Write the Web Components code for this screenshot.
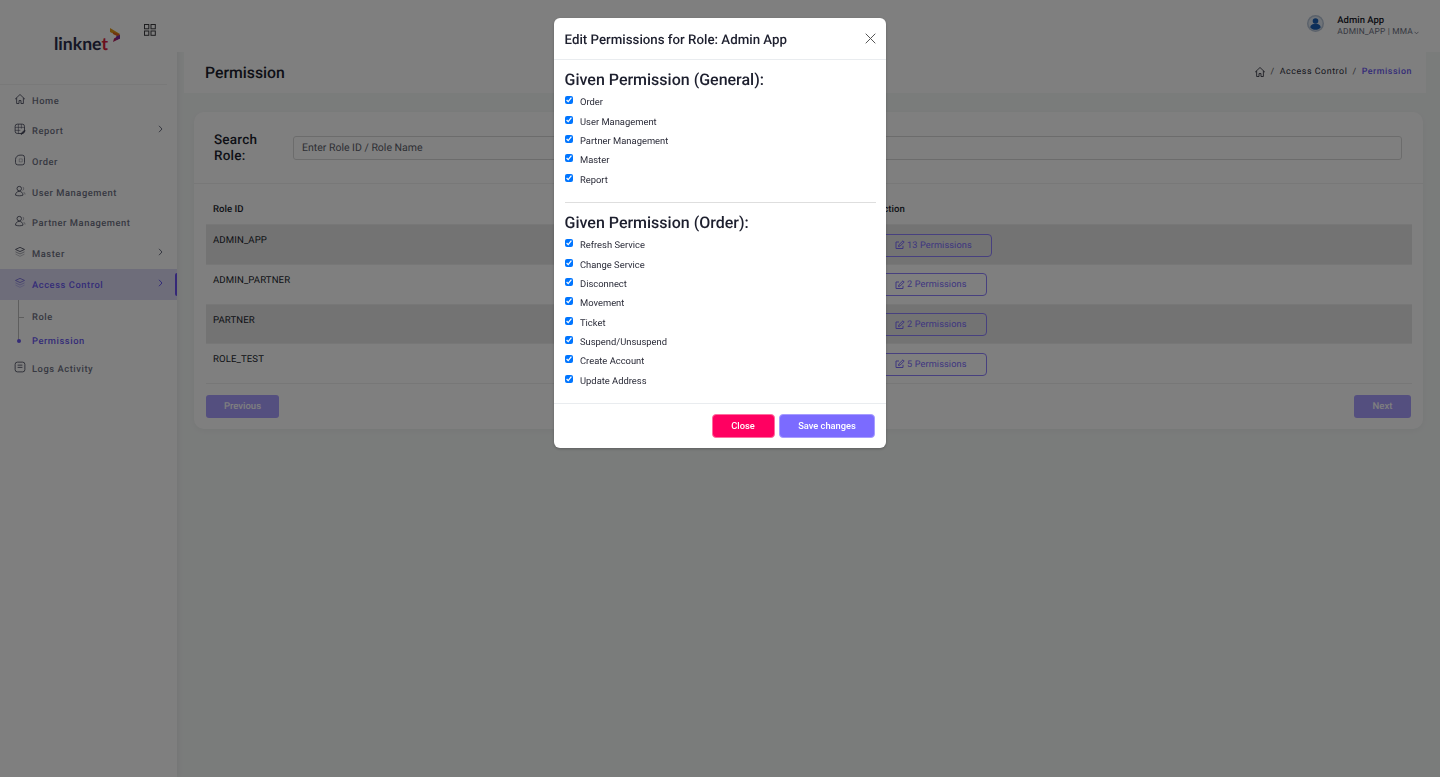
<!DOCTYPE html>
<html lang="en">
<head>
<meta charset="utf-8">
<title>Permission</title>
<style>
  html, body { margin: 0; height: 100%; }
  body { background: #f5f8f7; font-family: Roboto, "Liberation Sans", sans-serif; overflow: hidden; text-rendering: geometricPrecision; }
  app-shell { height: 777px; }
</style>
</head>
<body>
<app-shell>
  <app-sidebar slot="sidebar">
    <nav-item icon="home" label="Home"></nav-item>
    <nav-item icon="report" label="Report" arrow></nav-item>
    <nav-item icon="order" label="Order"></nav-item>
    <nav-item icon="user" label="User Management"></nav-item>
    <nav-item icon="user" label="Partner Management"></nav-item>
    <nav-item icon="layers" label="Master" arrow></nav-item>
    <nav-item icon="layers" label="Access Control" arrow active></nav-item>
    <nav-sub>
      <nav-sub-item label="Role"></nav-sub-item>
      <nav-sub-item label="Permission" active></nav-sub-item>
    </nav-sub>
    <nav-item icon="logs" label="Logs Activity"></nav-item>
  </app-sidebar>
  <app-topbar slot="topbar"></app-topbar>
  <page-title slot="main"></page-title>
  <role-card slot="main">
    <role-row striped role="ADMIN_APP" count="13"></role-row>
    <role-row role="ADMIN_PARTNER" count="2"></role-row>
    <role-row striped role="PARTNER" count="2"></role-row>
    <role-row role="ROLE_TEST" count="5"></role-row>
  </role-card>
</app-shell>
<perm-modal title-text="Edit Permissions for Role: Admin App">
  <perm-group heading="Given Permission (General):" items="Order|User Management|Partner Management|Master|Report"></perm-group>
  <hr-line></hr-line>
  <perm-group heading="Given Permission (Order):" items="Refresh Service|Change Service|Disconnect|Movement|Ticket|Suspend/Unsuspend|Create Account|Update Address"></perm-group>
</perm-modal>

<script>
const ICONS = {
  home: `<path d="M1.500 8.200 8 2l6.500 6.200"/><path d="M3.500 6.500v7.500h3.200v-4h2.600v4h3.200V6.500"/>`,
  report: `<rect x="1.500" y="1.500" width="12.500" height="12.500" rx="3"/><path d="M1.500 5.800h12.500M1.500 9.800h7M5.800 1.500v12.500M9.800 1.500v6" stroke-opacity=".7"/><path d="m9.500 14 4.500-4.500 1 1-4.500 4.500h-1z" fill="currentColor"/>`,
  order: `<path d="M8 1.500h3a3 3 0 0 1 3 3v7a3 3 0 0 1-3 3H5a3 3 0 0 1-3-3V7.500A6 6 0 0 1 8 1.500z"/><path d="M7 6.500h4v4H7z" stroke-opacity=".4"/>`,
  user: `<circle cx="7" cy="4.800" r="3"/><path d="M2 13.500c0-3 2.200-5 5-5s5 2 5 5c-2.800 1.200-7.200 1.200-10 0z"/><path d="M11.500 2.500a2.800 2.800 0 0 1 0 4.800M13 9.500c1 .7 1.700 1.800 1.700 3.200" stroke-opacity=".55"/>`,
  layers: `<path d="M8 1.800 14 4.600 8 7.400 2 4.600z"/><path d="M2 7.800 8 10.600 14 7.800" stroke-opacity=".6"/><path d="M2 10.800 8 13.800l6-3" stroke-opacity=".4"/>`,
  logs: `<rect x="1.500" y="1.500" width="13" height="13" rx="3"/><path d="M4.800 5.500h6.400M4.800 8.500h6.400"/>`
};

function defineEl(name, css, html) {
  customElements.define(name, class extends HTMLElement {
    connectedCallback() {
      if (this.shadowRoot) return;
      const root = this.attachShadow({ mode: "open" });
      const a = (n) => this.getAttribute(n) || "";
      root.innerHTML = `<style>${css}</style>${html(a, this)}`;
    }
  });
}

defineEl("app-shell", `
  :host { display: grid; grid-template-columns: 177px 1fr; grid-template-rows: 52px 1fr; }
  .side { grid-row: 1 / 3; display: block; }
  .main { padding: 0 14px 0 7px; min-width: 0; }
`, () => `
  <div class="side"><slot name="sidebar"></slot></div>
  <div><slot name="topbar"></slot></div>
  <div class="main"><slot name="main"></slot></div>
`);

defineEl("app-sidebar", `
  :host { display: block; height: 777px; background: #fff; box-shadow: 2px 0 5px rgba(0,0,0,.05); }
  .brand { height: 84.700px; box-sizing: border-box; position: relative; border-bottom: 1px solid #f3f3f3; margin-right: 10px; }
  .logo { position: absolute; left: 54px; top: 27px; display: flex; align-items: flex-start; }
  .word { font: 700 17.600px/1 Lato, sans-serif; color: #2a2d4a; margin-top: 8px; }
  .word i { font-style: normal; color: #d8203c; }
  .mark { margin-left: 1px; margin-top: 1px; }
  .grid { position: absolute; left: 144px; top: 24px; }
`, () => `
  <div class="brand">
    <div class="logo">
      <span class="word">linkne<i>t</i></span>
      <svg class="mark" width="12" height="15" viewBox="0 0 12 15"><path d="M1 0l10 6-3 1.500L1 4z" fill="#e39a1a"/><path d="M4 4l7 2.500-2 2L4 6z" fill="#e0641f"/><path d="M11 7v3.500L4 14l1-3.500z" fill="#b3205f"/><path d="M7 8.500l4-1.500v3.500L7 12z" fill="#7d2a9e"/></svg>
    </div>
    <svg class="grid" width="12" height="12" viewBox="0 0 12 12" fill="none" stroke="#3a3a3f" stroke-width="1"><rect x=".5" y=".5" width="4.300" height="4.300"/><rect x="7" y=".5" width="4.300" height="4.300"/><rect x=".5" y="7" width="4.300" height="4.300"/><rect x="7" y="7" width="4.300" height="4.300"/></svg>
  </div>
  <slot></slot>
`);

defineEl("nav-item", `
  :host { display: block; }
  .row { height: 30.700px; display: flex; align-items: center; padding-left: 14px; position: relative; font: 500 9.350px Roboto, sans-serif; letter-spacing: .55px; color: #6e7183; box-sizing: border-box; }
  .row.on { background: #dcdbf5; color: #6a58f0; }
  svg.ic { width: 12px; height: 12px; margin-right: 6px; margin-top: -3px; fill: none; stroke: #44465a; stroke-width: 1.100; color: #44465a; }
  .on svg.ic { stroke: #7468d8; color: #7468d8; }
  .txt { padding-top: 2px; }
  .arr { position: absolute; left: 158px; top: 10px; width: 5px; height: 8px; fill: none; stroke: #6e7183; stroke-width: 1; }
  .on .arr { stroke: #6a58f0; }
  .bar { position: absolute; right: 0; top: 4px; bottom: 4px; width: 2.500px; border-radius: 2px 0 0 2px; background: #6a50f0; }
`, (a, el) => `
  <div class="row ${el.hasAttribute("active") ? "on" : ""}">
    <svg class="ic" viewBox="0 0 16 16">${ICONS[a("icon")]}</svg>
    <span class="txt">${a("label")}</span>
    ${el.hasAttribute("arrow") ? `<svg class="arr" viewBox="0 0 5 8"><path d="m1 .8 3 3.200-3 3.200"/></svg>` : ""}
    ${el.hasAttribute("active") ? `<span class="bar"></span>` : ""}
  </div>
`);

defineEl("nav-sub", `
  :host { display: block; padding: 6px 0 0; position: relative; }
  .line { position: absolute; left: 18px; top: 0; height: 41px; width: 1px; background: #bdbdbd; }
`, () => `<span class="line"></span><slot></slot>`);

defineEl("nav-sub-item", `
  :host { display: block; }
  .row { height: 23.800px; display: flex; align-items: center; padding-left: 32px; position: relative; font: 500 9.350px Roboto, sans-serif; letter-spacing: .55px; color: #6e7183; }
  .row.on { color: #6a58f0; }
  .lbl { padding-top: 1px; }
  .tick { position: absolute; left: 18px; width: 6px; height: 1px; background: #bdbdbd; }
  .dot { position: absolute; left: 16.500px; width: 4px; height: 4px; border-radius: 50%; background: #6a58f0; }
`, (a, el) => `
  <div class="row ${el.hasAttribute("active") ? "on" : ""}">
    <span class="${el.hasAttribute("active") ? "dot" : "tick"}"></span><span class="lbl">${a("label")}</span>
  </div>
`);

defineEl("app-topbar", `
  :host { display: flex; height: 52px; background: #fff; justify-content: flex-end; align-items: center; padding-right: 21px; box-sizing: border-box; }
  .who { display: flex; align-items: center; gap: 13px; margin-top: -1px; }
  .name { font: 500 9.500px/13px Roboto, sans-serif; color: #1b1c2b; }
  .sub { font: 400 8.400px/11px Roboto, sans-serif; color: #6e7183; letter-spacing: .2px; display: flex; align-items: center; }
  .sub svg { margin-left: 1px; margin-top: 2px; }
  .av { margin-top: -4px; }
`, () => `
  <div class="who">
    <svg class="av" width="17" height="17" viewBox="0 0 17 17"><circle cx="8.500" cy="8.500" r="8.500" fill="#b7c4d6"/><circle cx="8.500" cy="8.500" r="7" fill="#dfe7f0"/><circle cx="8.500" cy="6" r="2.800" fill="#1b5fb5"/><path d="M3.300 12.500c0-2.600 2.400-3.800 5.200-3.800s5.200 1.200 5.200 3.800c-1.300 1.500-3.100 2.300-5.200 2.300s-3.900-.8-5.200-2.300z" fill="#1b5fb5"/></svg>
    <div>
      <div class="name">Admin App</div>
      <div class="sub">ADMIN_APP | MMA<svg width="5" height="4" viewBox="0 0 5 4" fill="none" stroke="#6e7183" stroke-width=".8"><path d="m.5 .8 2 2 2-2"/></svg></div>
    </div>
  </div>
`);

defineEl("page-title", `
  :host { display: flex; height: 41px; background: #fff; align-items: center; justify-content: space-between; padding: 0 14px 0 21px; box-sizing: border-box; }
  h1 { margin: 0; font: 500 15.800px Roboto, sans-serif; color: #1d1f2e; }
  .crumbs { display: flex; align-items: center; font: 400 8.900px Roboto, sans-serif; letter-spacing: .55px; color: #2c2d3a; gap: 5px; margin-top: -2px; }
  .crumbs b { font-weight: 500; color: #6a58f0; }
  .sep { color: #555; }
  svg { fill: none; stroke: #2c2d3a; stroke-width: 1.100; }
`, () => `
  <h1>Permission</h1>
  <div class="crumbs">
    <svg width="12" height="12" viewBox="0 0 16 16">${ICONS.home}</svg>
    <span class="sep">/</span><span>Access Control</span><span class="sep">/</span><b>Permission</b>
  </div>
`);

defineEl("role-card", `
  :host { display: block; margin: 19px 3px 0 10px; height: 317px; background: #fff; border-radius: 10px; box-shadow: 0 2px 6px rgba(0,0,0,.04); box-sizing: border-box; }
  .search { display: flex; align-items: center; height: 72px; padding: 0 21px 0 20px; border-bottom: 1px solid #f0f0f0; box-sizing: border-box; }
  label { width: 79px; font: 500 13.500px/16px Roboto, sans-serif; color: #1d1f2e; letter-spacing: .2px; }
  .input { flex: 1; height: 24px; border: 1px solid #d9d9d9; border-radius: 3px; font: 400 10.500px/22px Roboto, sans-serif; color: #5c5e6a; padding-left: 8px; box-sizing: border-box; }
  .table { padding: 0 11px 0 12px; }
  .head { height: 41px; display: grid; grid-template-columns: 664px 1fr; align-items: center; font: 500 9.600px Roboto, sans-serif; color: #1d1f2e; padding: 10px 7px 0; box-sizing: border-box; border-bottom: 1px solid #eee; }
  .pager { display: flex; justify-content: space-between; padding: 10.500px 12px 0; }
  .btn { height: 23px; border-radius: 3px; background: #7b6bff; color: #fff; font: 500 9.500px/23px Roboto, sans-serif; text-align: center; opacity: .65; }
`, () => `
  <div class="search"><label>Search<br>Role:</label><div class="input">Enter Role ID / Role Name</div></div>
  <div class="table">
    <div class="head"><span>Role ID</span><span>Action</span></div>
    <slot></slot>
  </div>
  <div class="pager"><div class="btn" style="width:73px">Previous</div><div class="btn" style="width:57px">Next</div></div>
`);

defineEl("role-row", `
  :host { display: block; }
  .row { height: 39.800px; display: grid; grid-template-columns: 662px 1fr; align-items: start; border-bottom: 1px solid #eee; padding-left: 7px; box-sizing: border-box; font: 400 9.600px/13px Roboto, sans-serif; color: #1d1f2e; letter-spacing: .1px; }
  .row.s { background: #e6e6e6; }
  .id { padding-top: 9px; }
  .btn { display: inline-flex; align-items: center; height: 23px; margin-top: 8.500px; padding: 0 19px; border: 1px solid #8f80ff; border-radius: 4px; color: #7b6bff; font: 400 9.200px Roboto, sans-serif; box-sizing: border-box; }
  svg { margin-right: 2px; fill: none; stroke: #7b6bff; stroke-width: 1; }
`, (a, el) => `
  <div class="row ${el.hasAttribute("striped") ? "s" : ""}">
    <span class="id">${a("role")}</span>
    <span><span class="btn"><svg width="10" height="10" viewBox="0 0 10 10"><path d="M8 5.800V8.500H1V2h3"/><path d="m3.500 6.500.4-1.700L8 .8l1.200 1.200-4 4z"/></svg>${a("count")} Permissions</span></span>
  </div>
`);

defineEl("perm-modal", `
  :host { position: fixed; inset: 0; background: rgba(0,0,0,.5); display: block; }
  .box { width: 332px; margin: 18px auto 0; background: #fff; border-radius: 6px; box-shadow: 0 1px 3px rgba(0,0,0,.25); overflow: hidden; }
  header { height: 42px; display: flex; align-items: center; justify-content: space-between; padding: 0 10.500px; border-bottom: 1px solid #e9ecef; box-sizing: border-box; }
  h5 { margin: 0; padding-top: 3px; font: 500 13.300px Roboto, sans-serif; color: #1d1f2e; }
  .body { padding: 10px 10.500px 12.500px; }
  footer { height: 45px; display: flex; justify-content: flex-end; align-items: center; gap: 4.500px; padding: 0 11px 0 0; border-top: 1px solid #e9ecef; box-sizing: border-box; }
  button { height: 24px; border-radius: 4px; font: 500 9.300px Roboto, sans-serif; color: #fff; padding: 0; }
  .close { width: 63px; background: #ff0061; border: 1px solid #ff6ea0; }
  .save { width: 96px; background: #7b6bff; border: 1px solid #a79dff; }
`, (a) => `
  <div class="box">
    <header>
      <h5>${a("title-text")}</h5>
      <svg width="11" height="11" viewBox="0 0 11 11" fill="none" stroke="#555" stroke-width="1"><path d="m.7 .7 9.600 9.600M10.300 .7.700 10.300"/></svg>
    </header>
    <div class="body"><slot></slot></div>
    <footer><button class="close">Close</button><button class="save">Save changes</button></footer>
  </div>
`);

defineEl("perm-group", `
  :host { display: block; }
  h3 { margin: 0 0 2px; font: 500 16px/20px Roboto, sans-serif; color: #1d1f2e; }
  label { display: flex; align-items: center; height: 19.400px; font: 400 9.400px Roboto, sans-serif; color: #2a2b38; }
  label span { padding-top: 2px; }
  input { width: 8px; height: 8px; margin: -3px 7.500px 0 0; accent-color: #0075ff; }
`, (a) => `
  <h3>${a("heading")}</h3>
  ${a("items").split("|").map((t) => `<label><input type="checkbox" checked><span>${t}</span></label>`).join("")}
`);

defineEl("hr-line", `
  :host { display: block; height: 1px; background: #dedede; margin: 13px 0 10px; }
`, () => ``);
</script>
</body>
</html>
